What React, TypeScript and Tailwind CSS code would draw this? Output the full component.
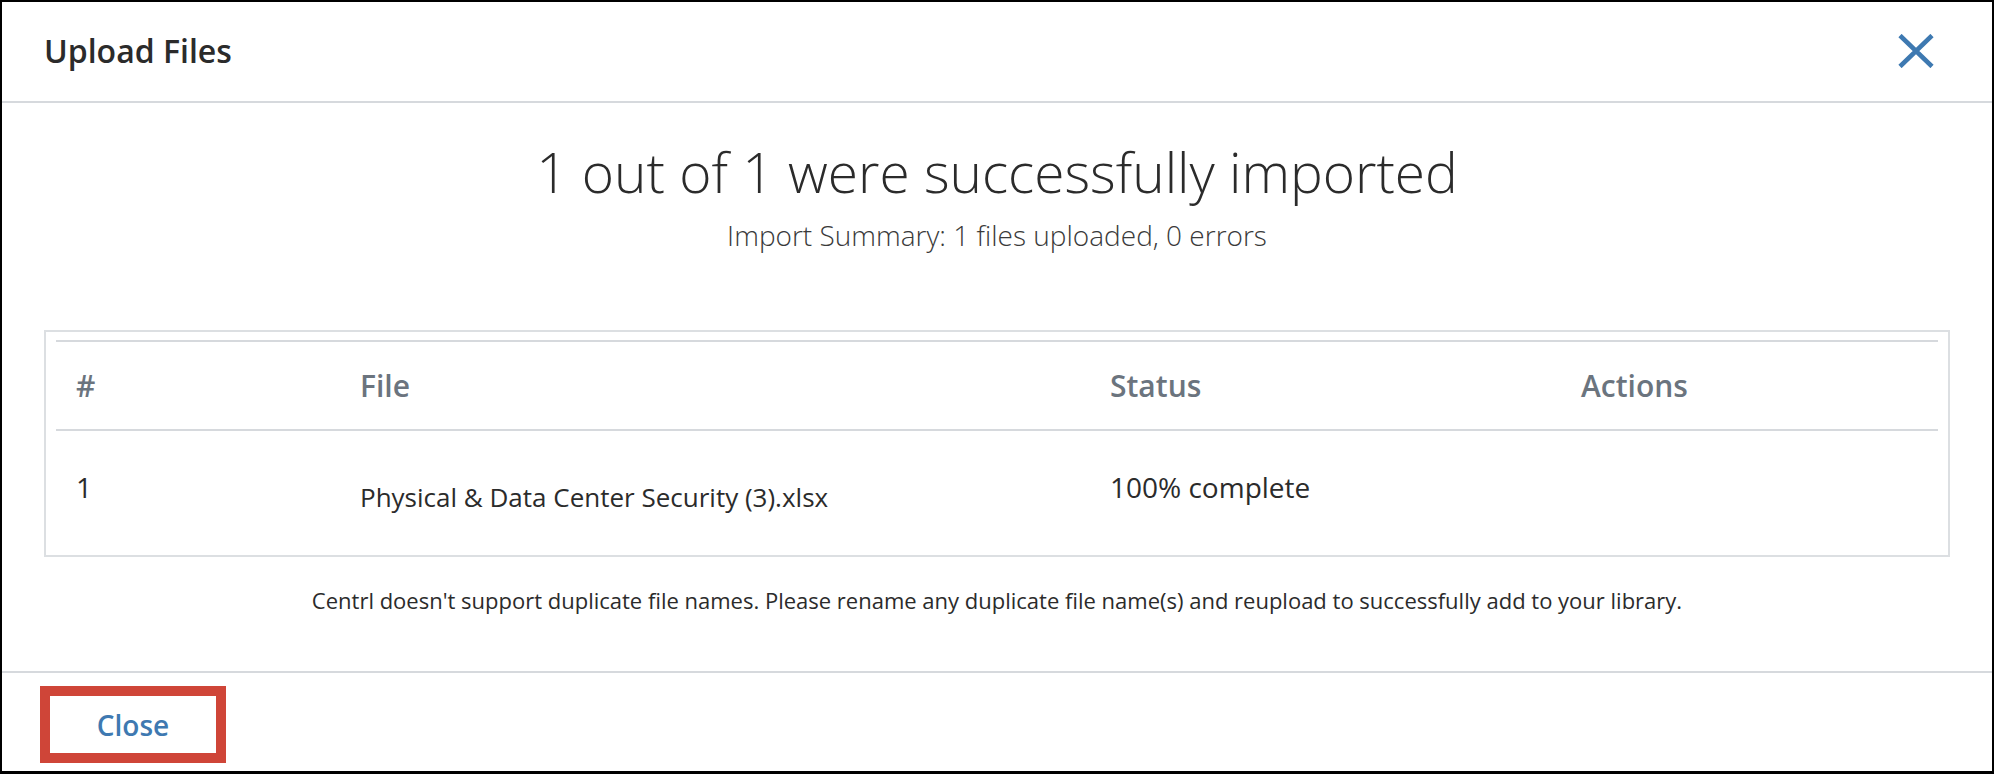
import { useState } from 'react';

type UploadRow = {
  id: number;
  file: string;
  status: string;
};

const rows: UploadRow[] = [
  { id: 1, file: 'Physical & Data Center Security (3).xlsx', status: '100% complete' },
];

const CloseIcon = () => (
  <svg width="36" height="34" viewBox="0 0 36 34" fill="none">
    <path d="M2 1.5 L34 32.5 M34 1.5 L2 32.5" stroke="#3e79b1" strokeWidth="4.6" />
  </svg>
);

export default function App() {
  const [open, setOpen] = useState(true);
  const total = rows.length;

  return (
    <div className="h-[774px] w-full bg-white font-['Open_Sans',_'Liberation_Sans',_sans-serif] text-[#333]">
      <div className="flex h-full flex-col border-x-2 border-t-2 border-b-[3px] border-black">
        {/* Header */}
        <header className="flex h-[101px] shrink-0 items-center justify-between border-b-2 border-[#d6d9dd] pl-[42px] pr-[58px]">
          <h2 className="-mt-[2px] text-[32px] font-semibold leading-none text-[#2b2b2b]">Upload Files</h2>
          <button type="button" aria-label="Close" onClick={() => setOpen(!open)} className="-mt-[1px]">
            <CloseIcon />
          </button>
        </header>

        {/* Body */}
        <section className="flex-1 px-[42px] pt-[34px]">
          <h1 className="text-center text-[55px] font-light leading-[70px] text-[#2b2b2b]">
            {total} out of {total} were successfully imported
          </h1>
          <p className="mt-[10px] text-center text-[28px] font-light leading-[36px] text-[#3a3a3a]">
            Import Summary: {total} files uploaded, 0 errors
          </p>

          <div className="mt-[77px] border-2 border-[#dcdfe2] px-[10px] pt-[8px]">
            <div className="grid h-[91px] grid-cols-[284px_750px_471px_1fr] items-center border-y-2 border-[#d6d9dd] px-5 text-[30px] font-semibold text-[#6b747e]">
              <div>#</div>
              <div>File</div>
              <div>Status</div>
              <div>Actions</div>
            </div>
            {rows.map((row) => (
              <div
                key={row.id}
                className="grid h-[124px] grid-cols-[284px_750px_471px_1fr] items-start px-5 leading-[40px] text-[#2b2b2b]"
              >
                <div className="pt-[36px] text-[28px]">{row.id}</div>
                <div className="pt-[46px] text-[26px]">{row.file}</div>
                <div className="pt-[36px] text-[28px]">{row.status}</div>
                <div />
              </div>
            ))}
          </div>

          <p className="mt-[28px] text-center text-[22px] leading-[30px] text-[#2b2b2b]">
            Centrl doesn't support duplicate file names. Please rename any duplicate file name(s) and reupload to
            successfully add to your library.
          </p>
        </section>

        {/* Footer */}
        <footer className="h-[100px] shrink-0 border-t-2 border-[#d6d9dd] pl-[38px] pt-[13px]">
          <button
            type="button"
            className="flex h-[77px] w-[186px] items-center justify-center border-[10px] border-[#cf4538] text-[28px] font-semibold text-[#3e79b1]"
          >
            Close
          </button>
        </footer>
      </div>
    </div>
  );
}
